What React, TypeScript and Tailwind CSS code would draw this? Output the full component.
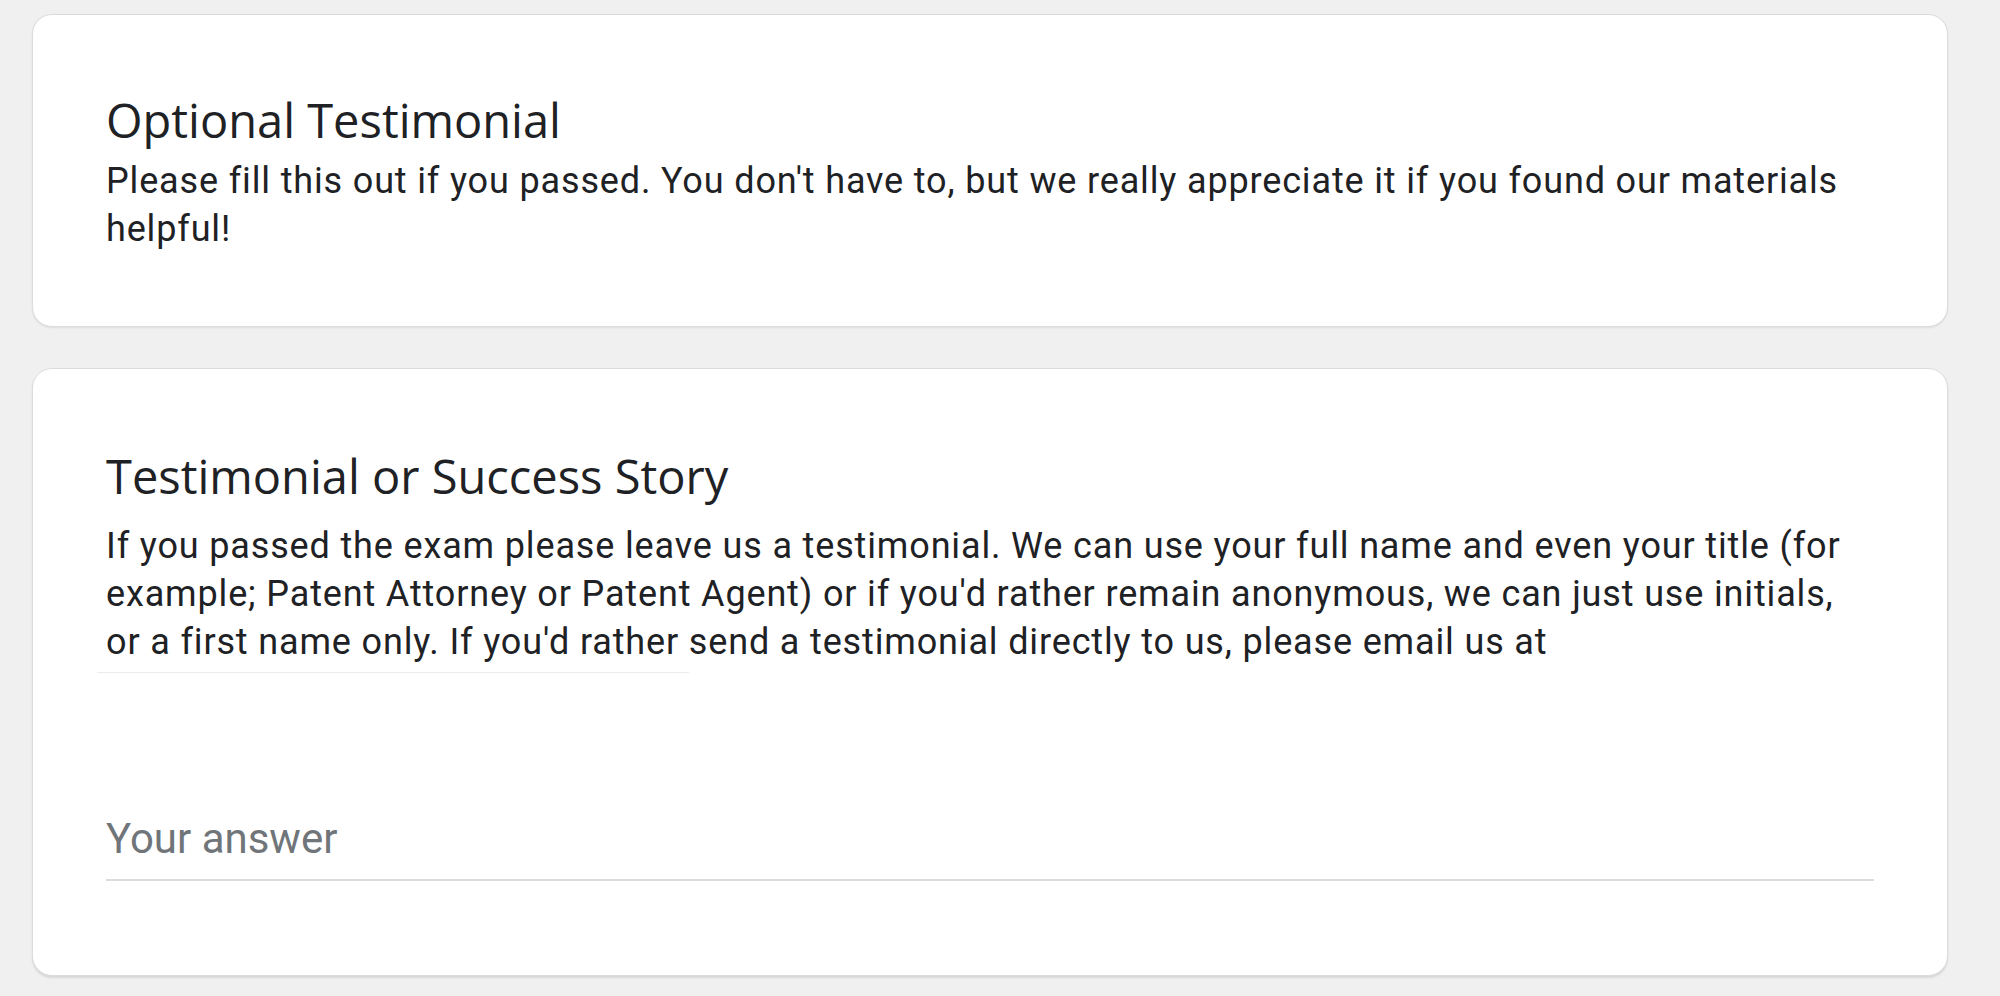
export default function App() {
  return (
    <div className="min-h-[996px] w-full bg-[#f0f0f0] pt-[14px] font-['Roboto',sans-serif] text-[#202124]">
      <div className="ml-[32px] flex w-[1916px] flex-col gap-[41px]">
        <section className="rounded-[20px] border border-[#dadce0] bg-white px-[73px] pt-[78px] pb-[73px] shadow-[0_1px_2px_rgba(0,0,0,0.08)]">
          <h1 className="mb-[10px] font-['Open_Sans',sans-serif] text-[47px] leading-[54px] font-medium">Optional Testimonial</h1>
          <p className="text-[36px] leading-[48px] tracking-[0.85px] text-[#202124]">
            Please fill this out if you passed. You don't have to, but we really appreciate it if you found our materials helpful!
          </p>
        </section>

        <section className="rounded-[20px] border border-[#dadce0] bg-white px-[73px] pt-[80px] pb-[94px] shadow-[0_2px_2px_rgba(0,0,0,0.1)]">
          <h2 className="mb-[19px] font-['Open_Sans',sans-serif] text-[47px] leading-[54px] font-normal">Testimonial or Success Story</h2>
          <p className="text-[36px] leading-[48px] tracking-[0.85px] text-[#202124]">
            If you passed the exam please leave us a testimonial. We can use your full name and even your title (for example; Patent Attorney or Patent Agent) or if you'd rather remain anonymous, we can just use initials, or a first name only. If you'd rather send a testimonial directly to us, please email us at
          </p>
          <div className="mt-[6px] ml-[-9px] h-px w-[592px] bg-[#ececec]" />
          <div className="mt-[138px] border-b-2 border-[#dadce0] pb-[12px]">
            <input
              className="w-full bg-transparent text-[42px] leading-[56px] text-[#202124] outline-none placeholder:text-[#70757a]"
              placeholder="Your answer"
            />
          </div>
        </section>
      </div>
    </div>
  );
}
